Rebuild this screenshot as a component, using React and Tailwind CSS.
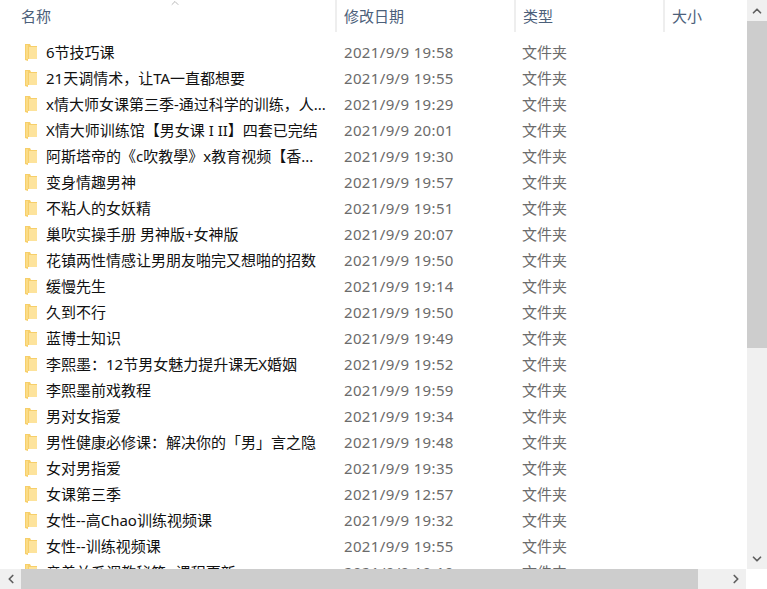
import { ChevronUp, ChevronDown, ChevronLeft, ChevronRight } from "lucide-react";

const rows = [
    ["6节技巧课", "2021/9/9 19:58"],
    ["21天调情术，让TA一直都想要", "2021/9/9 19:55"],
    ["x情大师女课第三季-通过科学的训练，人...", "2021/9/9 19:29"],
    ["X情大师训练馆【男女课 I II】四套已完结", "2021/9/9 20:01"],
    ["阿斯塔帝的《c吹教學》x教育视频【香...", "2021/9/9 19:30"],
    ["变身情趣男神", "2021/9/9 19:57"],
    ["不粘人的女妖精", "2021/9/9 19:51"],
    ["巢吹实操手册 男神版+女神版", "2021/9/9 20:07"],
    ["花镇两性情感让男朋友啪完又想啪的招数", "2021/9/9 19:50"],
    ["缓慢先生", "2021/9/9 19:14"],
    ["久到不行", "2021/9/9 19:50"],
    ["蓝博士知识", "2021/9/9 19:49"],
    ["李熙墨：12节男女魅力提升课无X婚姻", "2021/9/9 19:52"],
    ["李熙墨前戏教程", "2021/9/9 19:59"],
    ["男对女指爱", "2021/9/9 19:34"],
    ["男性健康必修课：解决你的「男」言之隐", "2021/9/9 19:48"],
    ["女对男指爱", "2021/9/9 19:35"],
    ["女课第三季", "2021/9/9 12:57"],
    ["女性--高Chao训练视频课", "2021/9/9 19:32"],
    ["女性--训练视频课", "2021/9/9 19:55"],
    ["亲着关系调教秘籍--课程更新", "2021/9/9 19:19"],
];

function FolderIcon() {
    return (
        <svg width="12" height="17" viewBox="0 0 12 17" className="shrink-0">
            <path d="M0 0h5l1 2h6v13H3v2l-3-1z" fill="#f7cf6a" />
            <path d="M4 3h8v12H4z" fill="#fde39c" />
            <path d="M1 1h2v14H1z" fill="#fbdc86" />
        </svg>
    );
}

function HeaderCell({ label, width, border = true }) {
    return (
        <div className={`h-full flex items-center text-[15px] text-[#4c607a] shrink-0 ${width} ${border ? "border-r-2 border-[#eeeeee]" : ""}`}>
            {label}
        </div>
    );
}

export default function App() {
    return (
        <div className="w-[767px] h-[589px] bg-white flex flex-col overflow-hidden font-['Noto_Sans','Noto_Sans_CJK_SC',sans-serif]">
            <div className="flex h-[569px]">
                <div className="w-[747px] flex flex-col overflow-hidden">
                    {/* header */}
                    <div className="relative flex h-[32px] shrink-0">
                        <ChevronUp className="absolute left-[169px] -top-[3px] text-[#8a8a8a]" size={12} strokeWidth={1.2} />
                        <HeaderCell label="名称" width="w-[337px] pl-[21px]" />
                        <HeaderCell label="修改日期" width="w-[179px] pl-[7px]" />
                        <HeaderCell label="类型" width="w-[149px] pl-[7px]" />
                        <HeaderCell label="大小" width="w-[82px] pl-[7px]" border={false} />
                    </div>

                    {/* rows */}
                    <div className="pt-[8px]">
                        {rows.map(([name, date]) => (
                            <div key={name} className="flex items-center h-[26px] text-[15px] leading-[24px] shrink-0 pb-[2px]">
                                <div className="w-[337px] flex items-center gap-[9px] pl-[25px] text-[#111111] shrink-0">
                                    <FolderIcon />
                                    <span className="whitespace-nowrap">{name}</span>
                                </div>
                                <div className="w-[178px] pl-[7px] text-[#6b6b6b] shrink-0 tracking-[0.35px]">{date}</div>
                                <div className="pl-[7px] text-[#6b6b6b]">文件夹</div>
                            </div>
                        ))}
                    </div>
                </div>

                {/* vertical scrollbar */}
                <div className="w-[20px] flex flex-col bg-[#f0f0f0]">
                    <div className="h-[21px] flex items-center justify-center">
                        <ChevronUp size={14} strokeWidth={3} className="text-[#606060]" />
                    </div>
                    <div className="h-[327px] bg-[#cdcdcd]" />
                    <div className="flex-1" />
                    <div className="h-[21px] flex items-center justify-center">
                        <ChevronDown size={14} strokeWidth={3} className="text-[#606060]" />
                    </div>
                </div>
            </div>

            {/* horizontal scrollbar */}
            <div className="flex h-[20px]">
                <div className="w-[746px] flex bg-[#f0f0f0]">
                    <div className="w-[21px] flex items-center justify-center">
                        <ChevronLeft size={14} strokeWidth={3} className="text-[#606060]" />
                    </div>
                    <div className="w-[677px] bg-[#cdcdcd]" />
                    <div className="flex-1" />
                    <div className="w-[21px] flex items-center justify-center">
                        <ChevronRight size={14} strokeWidth={3} className="text-[#606060]" />
                    </div>
                </div>
            </div>
        </div>
    );
}
